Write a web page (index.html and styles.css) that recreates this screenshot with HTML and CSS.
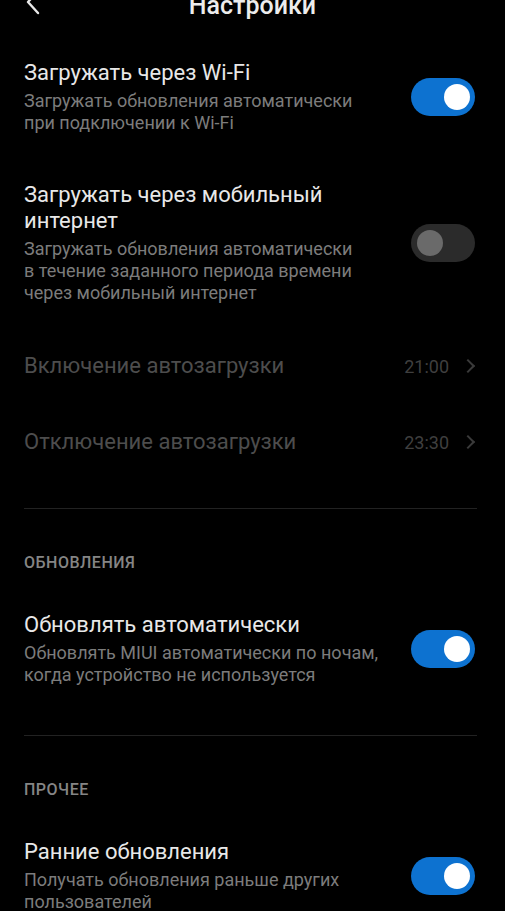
FILE: index.html
```html
<!DOCTYPE html>
<html lang="ru">

<head>
    <meta charset="UTF-8">
    <meta name="viewport" content="width=device-width, initial-scale=1.0">
    <title>Настройки</title>
    <link rel="stylesheet" href="styles.css">
</head>

<body>
    <!-- Header -->
    <header class="topbar">
        <svg class="back" width="16" height="26" viewBox="0 0 16 26">
            <polyline points="13,2 3,13 13,24" fill="none" stroke="#e8e8e8" stroke-width="2.4" stroke-linecap="round" stroke-linejoin="round"/>
        </svg>
        <h1>Настройки</h1>
    </header>

    <!-- Download settings -->
    <div class="row">
        <div class="text">
            <div class="title">Загружать через Wi-Fi</div>
            <div class="sub">Загружать обновления автоматически<br>при подключении к Wi-Fi</div>
        </div>
        <span class="switch on"></span>
    </div>

    <div class="row">
        <div class="text">
            <div class="title">Загружать через мобильный<br>интернет</div>
            <div class="sub">Загружать обновления автоматически<br>в течение заданного периода времени<br>через мобильный интернет</div>
        </div>
        <span class="switch"></span>
    </div>

    <div class="row nav disabled">
        <div class="title">Включение автозагрузки</div>
        <div class="value">21:00 <span class="chev"></span></div>
    </div>

    <div class="row nav disabled">
        <div class="title">Отключение автозагрузки</div>
        <div class="value">23:30 <span class="chev"></span></div>
    </div>

    <hr class="divider">

    <!-- Updates -->
    <div class="section">Обновления</div>

    <div class="row">
        <div class="text">
            <div class="title">Обновлять автоматически</div>
            <div class="sub">Обновлять MIUI автоматически по ночам,<br>когда устройство не используется</div>
        </div>
        <span class="switch on"></span>
    </div>

    <hr class="divider">

    <!-- Other -->
    <div class="section">Прочее</div>

    <div class="row">
        <div class="text">
            <div class="title">Ранние обновления</div>
            <div class="sub">Получать обновления раньше других<br>пользователей</div>
        </div>
        <span class="switch on"></span>
    </div>
</body>

</html>
```

FILE: styles.css
```css
/* Base styles */
body {
    font-family: Roboto, "Noto Sans", sans-serif;
    background-color: #000;
    color: #e6e6e6;
    margin: 0;
    padding: 0;
    overflow: hidden;
}

/* Header */
.topbar {
    height: 36px;
    position: relative;
    display: flex;
    justify-content: center;
}

.topbar h1 {
    margin: -9px 0 0;
    font-size: 25px;
    font-weight: 500;
    line-height: 30px;
    color: #ececec;
}

.back {
    position: absolute;
    left: 25px;
    top: -11px;
}

/* Rows */
.row {
    display: flex;
    align-items: center;
    justify-content: space-between;
    padding: 24px 30px 24px 24px;
}

.text {
    flex: 1;
}

.title {
    font-size: 22px;
    line-height: 26px;
    color: #e8e8e8;
}

.sub {
    margin-top: 4px;
    font-size: 18px;
    line-height: 22px;
    color: #7c7c7c;
}

.row.nav {
    padding-top: 25px;
    padding-bottom: 25px;
}

.row.disabled .title {
    color: #4d4d4d;
}

.value {
    display: flex;
    align-items: center;
    font-size: 18px;
    color: #3f3f3f;
}

.chev {
    display: inline-block;
    width: 8px;
    height: 8px;
    margin-left: 14px;
    margin-right: 2px;
    border-top: 2px solid #3a3a3a;
    border-right: 2px solid #3a3a3a;
    transform: rotate(45deg);
}

/* Switch */
.switch {
    flex: none;
    position: relative;
    width: 64px;
    height: 38px;
    margin-left: 16px;
    border-radius: 19px;
    background-color: #2b2b2b;
}

.switch::after {
    content: "";
    position: absolute;
    top: 6px;
    left: 6px;
    width: 26px;
    height: 26px;
    border-radius: 50%;
    background-color: #6a6a6a;
}

.switch.on {
    background-color: #0d72d0;
}

.switch.on::after {
    left: auto;
    right: 5px;
    background-color: #fff;
}

/* Divider */
.divider {
    margin: 25px 28px 0 24px;
    border: none;
    border-top: 1px solid #222;
}

.row.nav + .divider {
    margin-top: 28px;
}

/* Section header */
.section {
    padding: 44px 24px 15px;
    font-size: 16px;
    font-weight: 500;
    line-height: 20px;
    letter-spacing: 0.5px;
    text-transform: uppercase;
    color: #858585;
}
```
